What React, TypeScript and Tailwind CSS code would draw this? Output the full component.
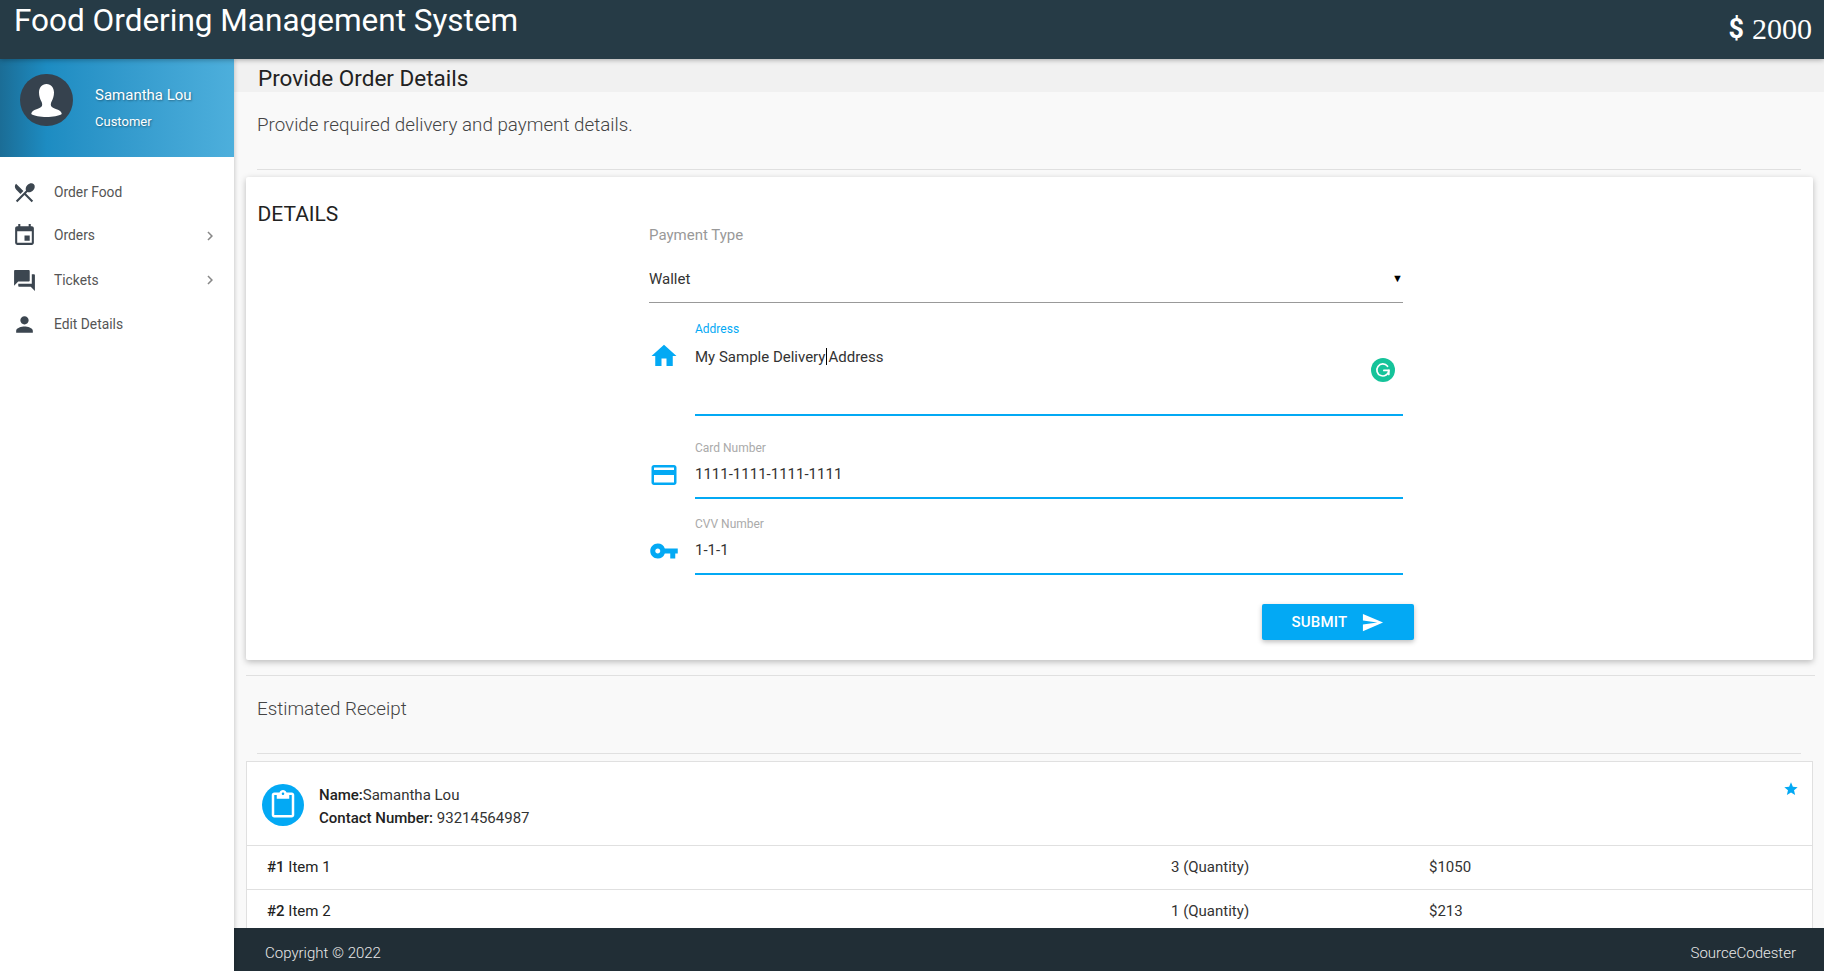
import { MdRestaurantMenu, MdEvent, MdQuestionAnswer, MdPerson, MdChevronRight, MdHome, MdCreditCard, MdVpnKey, MdSend, MdContentPaste, MdStar } from "react-icons/md";

const navItems = [
  { icon: MdRestaurantMenu, label: "Order Food", arrow: false, box: "h-[43px]" },
  { icon: MdEvent, label: "Orders", arrow: true, box: "h-[43px]" },
  { icon: MdQuestionAnswer, label: "Tickets", arrow: true, box: "h-[46px]" },
  { icon: MdPerson, label: "Edit Details", arrow: false, box: "h-[43px]" },
];

function Sidebar() {
  return (
    <aside className="z-10 flex w-[234px] shrink-0 flex-col bg-white shadow-[1px_0_4px_rgba(0,0,0,0.18)]">
      <div className="flex h-[98px] bg-gradient-to-r from-[#1b6d96] via-[#1d8cc2] via-[20%] to-[#4dafdc] pl-5">
        <div className="mt-[15px] flex h-[52px] w-[53px] items-center justify-center overflow-hidden rounded-full bg-[#36424e]">
          <svg viewBox="0 0 53 52" className="h-full w-full">
            <path fill="#fff" d="M26.500 10c-4.700 0-7.500 3.600-7.500 8.600 0 3.400 1 6.500 2.400 9 .9 1.500 1 3.400.5 4.400-.8 1.400-2.600 2.200-5.400 3.300-3 1-4.800 2.300-5.300 4.700 3 1.800 9 3 15.300 3s12.300-1.200 15.300-3c-.5-2.400-2.300-3.700-5.300-4.700-2.800-1.100-4.600-1.900-5.400-3.300-.5-1-.4-2.900.5-4.400 1.400-2.500 2.400-5.600 2.400-9 0-5-2.800-8.600-7.500-8.600z" />
          </svg>
        </div>
        <div className="ml-[22px] text-white [text-shadow:1px_1px_2px_rgba(0,0,0,0.35)]">
          <div className="mt-[26px] text-[15px] leading-5">Samantha Lou</div>
          <div className="mt-[9px] text-[13px] leading-4">Customer</div>
        </div>
      </div>
      <nav className="pt-[14px]">
        {navItems.map((item) => (
          <div key={item.label} className={`flex items-center pl-[11px] pr-[15px] text-[13.800px] text-[#555] ${item.box}`}>
            <item.icon className="ml-px h-[25px] w-[25px] text-[#3c4650]" />
            <span className="ml-[17px]">{item.label}</span>
            {item.arrow && <MdChevronRight className="ml-auto h-[18px] w-[18px] text-[#888]" />}
          </div>
        ))}
      </nav>
    </aside>
  );
}

function Field({ label, value, active, big, icon: Icon, top }: { label: string; value: React.ReactNode; active?: boolean; big?: boolean; icon: React.ComponentType<{ className?: string }>; top: string }) {
  return (
    <div className={`relative flex ${top}`}>
      <div className="w-[46px] shrink-0 pt-5">
        <Icon className="h-[30px] w-[30px] text-[#03a9f4]" />
      </div>
      <div className="flex-1">
        <div className={`text-[12px] leading-4 ${active ? "text-[#03a9f4]" : "text-[#aaa]"}`}>{label}</div>
        <div className={`mt-2 border-b-2 border-[#03a9f4] text-[15px] leading-5 text-[#333] ${big ? "h-[71px]" : "h-[35px]"}`}>{value}</div>
      </div>
    </div>
  );
}

function DetailsCard() {
  return (
    <section className="ml-3 mr-[11px] mt-[7px] flex rounded-[2px] bg-white shadow-[0_2px_6px_rgba(0,0,0,0.25)]">
      <div className="w-[403px] shrink-0 pl-[11.500px] pt-[23px] text-[21px] leading-7 text-[#222]">DETAILS</div>
      <div className="w-[765px] pt-[48px] pb-5">
        <div className="pr-[11px]">
          <div className="text-[15px] leading-5 text-[#999]">Payment Type</div>
          <div className="mt-3 flex h-[46px] items-center justify-between border-b border-[#999] text-[15px] text-[#333]">
            <span>Wallet</span>
            <span className="text-[11px] text-black">▼</span>
          </div>
          <div className="relative">
            <Field
              top="mt-[18px]"
              label="Address"
              active
              big
              icon={MdHome}
              value={
                <span>
                  My Sample Delivery<span className="mx-[1px] inline-block h-[17px] w-px translate-y-[3px] bg-black"></span>Address
                </span>
              }
            />
            <div className="absolute bottom-[34px] right-[8px] flex h-6 w-6 items-center justify-center rounded-full bg-[#15c39a]">
              <svg viewBox="0 0 24 24" className="h-5 w-5" fill="none" stroke="#fff" strokeWidth="2" strokeLinecap="round">
                <path d="M17.500 7.500A7.200 7.200 0 1 0 19 12.500" />
                <path d="M13 12.500h6v5" />
              </svg>
            </div>
          </div>
          <Field top="mt-6" label="Card Number" value="1111-1111-1111-1111" icon={MdCreditCard} />
          <Field top="mt-[17px]" label="CVV Number" value="1-1-1" icon={MdVpnKey} />
        </div>
        <div className="mt-[29px] flex justify-end">
          <button className="flex h-9 w-[152px] items-center justify-center gap-[14px] rounded-[2px] bg-[#03a9f4] text-[15px] font-medium tracking-[0.2px] text-white shadow-[0_2px_5px_rgba(0,0,0,0.26)]">
            SUBMIT
            <MdSend className="h-[23px] w-[23px]" />
          </button>
        </div>
      </div>
    </section>
  );
}

function Receipt() {
  return (
    <section className="ml-3 mr-[11px] mt-[7px] border border-[#e0e0e0] bg-white text-[15px] text-[#333]">
      <div className="flex h-[84px] items-start border-b border-[#e0e0e0] pl-[15px] pr-[13px] pt-[22px]">
        <div className="flex h-[42px] w-[42px] shrink-0 items-center justify-center rounded-full bg-[#03a9f4]">
          <MdContentPaste className="h-[30px] w-[30px] text-white" />
        </div>
        <div className="ml-[15px] leading-[23px]">
          <div><b className="font-medium text-[#222]">Name:</b>Samantha Lou</div>
          <div><b className="font-medium text-[#222]">Contact Number:</b> 93214564987</div>
        </div>
        <MdStar className="-mt-[3px] ml-auto h-4 w-4 text-[#03a9f4]" />
      </div>
      {[
        { n: "#1", name: "Item 1", qty: "3 (Quantity)", price: "$1050" },
        { n: "#2", name: "Item 2", qty: "1 (Quantity)", price: "$213" },
      ].map((row) => (
        <div key={row.n} className="grid h-11 grid-cols-[904px_258px_1fr] items-center border-b border-[#e0e0e0] pl-5">
          <div className="text-[#222]"><b className="font-medium">{row.n}</b> {row.name}</div>
          <div>{row.qty}</div>
          <div>{row.price}</div>
        </div>
      ))}
    </section>
  );
}

export default function App() {
  return (
    <div className="flex h-screen flex-col overflow-hidden bg-[#f9f9f9] font-['Roboto',sans-serif]">
      <header className="z-20 flex h-[59px] shrink-0 items-start justify-between bg-[#263b46] pl-[14px] pr-3 text-white shadow-[0_1px_5px_rgba(0,0,0,0.3)]">
        <h1 className="pt-px text-[31.500px] leading-[40px]">Food Ordering Management System</h1>
        <div className="mt-[10px] flex items-center gap-2 font-['Liberation_Serif',serif] text-[30px] leading-[38px]">
          <span className="font-['Roboto',sans-serif] text-[27px] font-bold">$</span>
          <span>2000</span>
        </div>
      </header>
      <div className="flex min-h-0 flex-1">
        <Sidebar />
        <main className="flex min-w-0 flex-1 flex-col">
          <div className="min-h-0 flex-1 overflow-hidden">
            <div className="flex h-[33px] items-end bg-[#f1f1f1] pb-px pl-[24px] text-[22.500px] leading-[26px] text-[#222]">Provide Order Details</div>
            <div className="mx-[23px] h-[78px] border-b border-[#e0e0e0] pt-[21px] text-[18.800px] font-light leading-6 text-[#444]">Provide required delivery and payment details.</div>
            <DetailsCard />
            <div className="ml-3 mr-[9px] mt-[15px] border-t border-[#e0e0e0]"></div>
            <div className="mx-[23px] h-[78px] border-b border-[#e0e0e0] pt-[21px] text-[18.800px] font-light leading-6 text-[#444]">Estimated Receipt</div>
            <Receipt />
          </div>
          <footer className="flex h-[43px] shrink-0 items-center justify-between bg-[#212e36] pl-[31px] pr-7 pt-2 text-[15px] font-light text-[#e8e8e8]">
            <span>Copyright © 2022</span>
            <span>SourceCodester</span>
          </footer>
        </main>
      </div>
    </div>
  );
}
